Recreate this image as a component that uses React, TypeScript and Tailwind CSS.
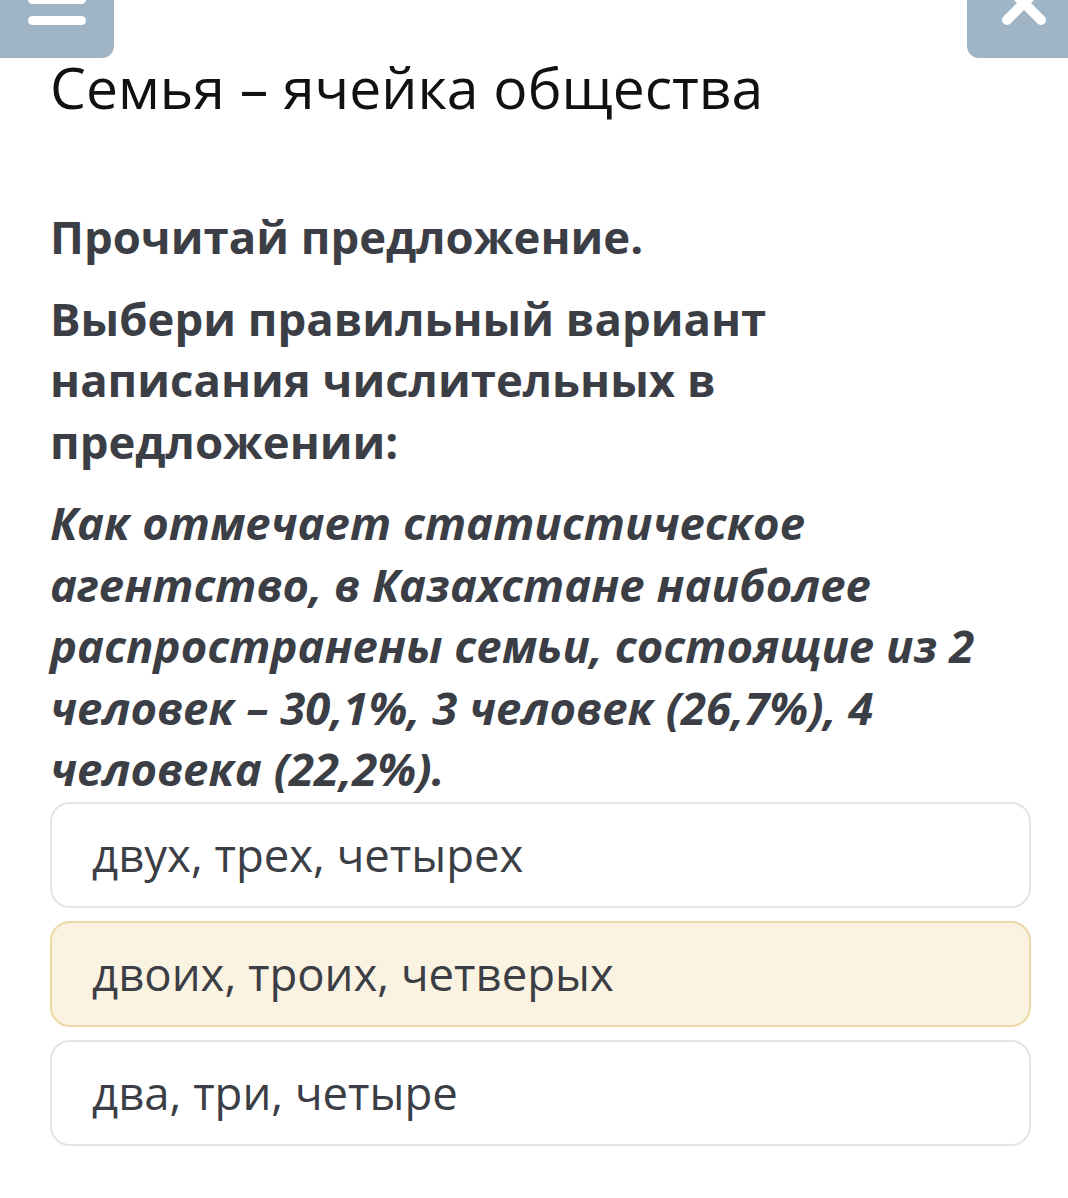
export default function App() {
  const options = [
    { text: "двух, трех, четырех", selected: false },
    { text: "двоих, троих, четверых", selected: true },
    { text: "два, три, четыре", selected: false },
  ];

  return (
    <div className="relative w-[1068px] h-[1198px] bg-white overflow-hidden" style={{ fontFamily: "'Open Sans', sans-serif" }}>
      {/* Top buttons */}
      <button className="absolute left-0 top-0 w-[114px] h-[58px] bg-[#9fb4c4] rounded-br-[12px]" aria-label="Menu">
        <span className="absolute left-[28px] top-[-5px] w-[58px] h-[9px] rounded-full bg-white" />
        <span className="absolute left-[28px] top-[16px] w-[58px] h-[9px] rounded-full bg-white" />
      </button>
      <button className="absolute right-0 top-0 w-[101px] h-[58px] bg-[#9fb4c4] rounded-bl-[12px]" aria-label="Close">
        <svg className="absolute left-[32px] top-[-14px]" width="50" height="42" viewBox="0 0 50 42" fill="none" stroke="white" strokeWidth="10" strokeLinecap="round">
          <path d="M8 0 L42 34" />
          <path d="M42 0 L8 34" />
        </svg>
      </button>

      <div className="pl-[50px] pr-[37px] pt-[47px]">
        <h1 className="text-[57px] leading-[81px] text-[#111111] font-normal">Семья – ячейка общества</h1>

        <div className="mt-[78px] pr-[40px] text-[#3b3e45] font-bold text-[45.5px] leading-[61.5px] flex flex-col gap-[20px]">
          <p>Прочитай предложение.</p>
          <p>Выбери правильный вариант написания числительных в предложении:</p>
          <p className="italic">
            Как отмечает статистическое агентство, в Казахстане наиболее распространены семьи, состоящие из 2 человек – 30,1%, 3 человек (26,7%), 4 человека (22,2%).
          </p>
        </div>

        <div className="mt-[2px] flex flex-col gap-[13px]">
          {options.map((o) => (
            <div
              key={o.text}
              className={
                o.selected
                  ? "h-[106px] rounded-[20px] border-2 border-[#ecd9a4] bg-[#fbf3e1] px-[40px] flex items-center text-[45.5px] text-[#3b3e45]"
                  : "h-[106px] rounded-[20px] border-2 border-[#e4e4e4] bg-white px-[40px] flex items-center text-[45.5px] text-[#3b3e45]"
              }
            >
              {o.text}
            </div>
          ))}
        </div>
      </div>
    </div>
  );
}
